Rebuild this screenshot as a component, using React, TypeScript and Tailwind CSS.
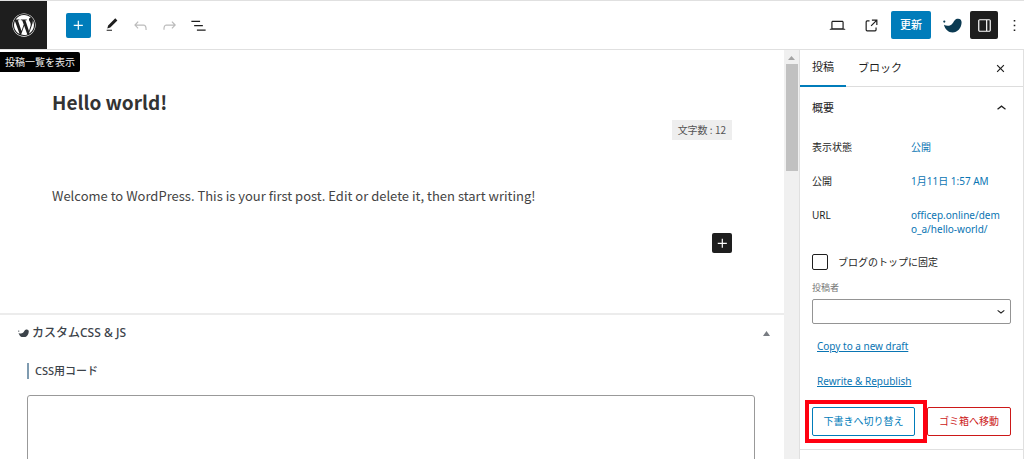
import type { ReactNode } from "react"
import { FaWordpress } from "react-icons/fa"

const icons = {
  plus: "M11 12.5V17.5H12.5V12.5H17.5V11H12.5V6H11V11H6V12.5H11Z",
  edit: "M20.1 5.1L16.9 2 6.2 12.7l-1.3 4.4 4.5-1.3L20.1 5.1zM4 20.8h8v-1.5H4v1.5z",
  undo: "M18.3 11.7c-.6-.6-1.4-.9-2.3-.9H6.7l2.9-3.3-1.1-1-4.5 5L8.5 16l1-1-2.7-2.7H16c.5 0 .9.2 1.3.5 1 1 1 3.4 1 4.5v.3h1.5v-.2c0-1.5 0-4.3-1.5-5.7z",
  redo: "M15.6 6.5l-1.1 1 2.9 3.3H8c-.9 0-1.7.3-2.3.9-1.4 1.5-1.4 4.2-1.4 5.6v.2h1.5v-.3c0-1.1 0-3.5 1-4.5.3-.3.7-.5 1.3-.5h9.2L14.5 15l1.1 1.1 4.6-4.6-4.6-5z",
  list: "M3 6h11v1.5H3V6Zm3.5 5.5h11V13h-11v-1.5ZM21 17H10v1.5h11V17Z",
  desktop: "M20.5 16h-.7V8c0-1.1-.9-2-2-2H6.2c-1.1 0-2 .9-2 2v8h-.7c-.8 0-1.5.7-1.5 1.5h20c0-.8-.7-1.5-1.5-1.5zM5.7 8c0-.3.2-.5.5-.5h11.6c.3 0 .5.2.5.5v7.6H5.7V8z",
  external: "M19.5 4.5h-7V6h4.44l-5.97 5.97 1.06 1.06L18 7.06v4.44h1.5v-7Zm-13 1a2 2 0 0 0-2 2v10a2 2 0 0 0 2 2h10a2 2 0 0 0 2-2v-3H17v3a.5.5 0 0 1-.5.5h-10a.5.5 0 0 1-.5-.5v-10a.5.5 0 0 1 .5-.5h3V5.5h-3Z",
  drawer: "M18 4H6c-1.1 0-2 .9-2 2v12c0 1.1.9 2 2 2h12c1.1 0 2-.9 2-2V6c0-1.1-.9-2-2-2zm-4 14.5H6c-.3 0-.5-.2-.5-.5V6c0-.3.2-.5.5-.5h8v13zm4.5-.5c0 .3-.2.5-.5.5h-2.5v-13H18c.3 0 .5.2.5.5v12z",
  more: "M13 19h-2v-2h2v2zm0-6h-2v-2h2v2zm0-6h-2V5h2v2z",
  close: "M12 13.06l3.712 3.713 1.061-1.06L13.061 12l3.712-3.712-1.06-1.06L12 10.938 8.288 7.227l-1.061 1.06L10.939 12l-3.712 3.712 1.06 1.061L12 13.061z",
  up: "M6.5 12.4L12 8l5.5 4.4-.9 1.2L12 10l-4.5 3.6-1-1.2z",
  down: "M17.5 11.6L12 16l-5.5-4.4.9-1.2L12 14l4.5-3.6 1 1.2z",
}

function Icon({ name, className = "size-[19px]" }: { name: keyof typeof icons; className?: string }) {
  return (
    <svg viewBox="0 0 24 24" fill="currentColor" className={className} aria-hidden="true">
      <path d={icons[name]} />
    </svg>
  )
}

function Swoosh({ className }: { className: string }) {
  return (
    <svg viewBox="0 0 19 15" fill="currentColor" className={className} aria-hidden="true">
      <circle cx="1.3" cy="3.6" r="1.1" />
      <path d="M1 6.8C3.2 8 6.4 8.4 8.6 6.6 10.6 5 11 1.4 14.2.8 17 .3 18.8 2 18.6 4.8 18.2 10.4 14.4 14.5 9.6 14.5 5.4 14.5 2 11.4 1 6.8Z" />
    </svg>
  )
}

function ToolButton({ label, children, className = "" }: { label: string; children: ReactNode; className?: string }) {
  return (
    <button type="button" aria-label={label} className={`flex h-7 items-center justify-center ${className}`}>
      {children}
    </button>
  )
}

function Header() {
  return (
    <header className="relative flex h-[50px] shrink-0 items-center border-y border-[#e0e0e0]">
      <a href="#posts" aria-label="投稿一覧を表示" className="flex h-full w-[47px] items-center justify-center bg-[#1e1e1e] text-white">
        <FaWordpress className="size-6" />
      </a>
      <span role="tooltip" className="absolute top-[51px] left-0 z-10 rounded-r-xs bg-black px-[5px] text-[10px] leading-5 text-[#f0f0f0]">
        投稿一覧を表示
      </span>
      <div className="ml-[19px] flex items-center gap-1">
        <button type="button" aria-label="ブロックを追加" className="flex size-[25px] items-center justify-center rounded-xs bg-[#007cba] text-white">
          <Icon name="plus" />
        </button>
        <ToolButton label="ツール" className="ml-1 w-[25px]"><Icon name="edit" className="size-4" /></ToolButton>
        <ToolButton label="元に戻す" className="w-[25px] text-[#bbb]"><Icon name="undo" /></ToolButton>
        <ToolButton label="やり直す" className="w-[25px] text-[#bbb]"><Icon name="redo" /></ToolButton>
        <ToolButton label="リスト表示" className="w-[25px]"><Icon name="list" /></ToolButton>
      </div>
      <div className="ml-auto flex items-center gap-[6px]">
        <ToolButton label="表示" className="w-7"><Icon name="desktop" /></ToolButton>
        <ToolButton label="投稿を表示" className="w-7"><Icon name="external" /></ToolButton>
        <button type="button" className="h-7 w-10 rounded-xs bg-[#007cba] text-[11px] font-medium text-white">更新</button>
        <ToolButton label="テーマ設定" className="w-[27px] pl-[3px] text-[#0b3a52]"><Swoosh className="w-[19px]" /></ToolButton>
        <ToolButton label="設定" className="w-7 rounded-xs bg-[#1e1e1e] text-white"><Icon name="drawer" /></ToolButton>
        <ToolButton label="オプション" className="w-5"><Icon name="more" /></ToolButton>
      </div>
    </header>
  )
}

function Editor() {
  return (
    <main className="flex min-w-0 flex-1 flex-col overflow-hidden">
      <section className="flex flex-col border-b-2 border-[#ececec] px-13 pt-9 pb-15 font-['Noto_Sans_CJK_JP',sans-serif] text-[#333]">
        <h1 className="text-[19px] leading-8 font-bold">Hello world!</h1>
        <span className="mt-[2px] self-end bg-[#eee] px-[6px] text-[10px] leading-5 text-[#555]">文字数 : 12</span>
        <p className="mt-[46px] text-[13px] leading-5 text-[#444]">
          Welcome to WordPress. This is your first post. Edit or delete it, then start writing!
        </p>
        <button type="button" aria-label="ブロックを追加" className="mt-[27px] flex size-5 items-center justify-center self-end rounded-xs bg-[#1e1e1e] text-white">
          <Icon name="plus" />
        </button>
      </section>
      <section className="flex flex-1 flex-col text-[#3c434a]">
        <div className="flex h-9 items-center justify-between pr-[14px] pl-[18px]">
          <h2 className="flex items-center gap-[3px] text-xs font-medium">
            <Swoosh className="w-[11px]" />
            カスタムCSS &amp; JS
          </h2>
          <button type="button" aria-label="パネルを切り替え" className="text-[#787c82]">
            <svg viewBox="0 0 7 5" fill="currentColor" className="w-[7px]"><path d="M3.5 0 7 5H0Z" /></svg>
          </button>
        </div>
        <div className="flex flex-1 flex-col pt-3 pr-[29px] pl-[27px]">
          <label htmlFor="css-code" className="self-start border-l-2 border-[#7f9bb0] pl-[6px] text-[11px] leading-4 font-medium">
            CSS用コード
          </label>
          <textarea id="css-code" className="mt-4 min-h-24 resize-none rounded-[3px] border border-[#999]" />
        </div>
      </section>
    </main>
  )
}

function Scrollbar() {
  return (
    <div className="flex w-[15px] shrink-0 flex-col items-center bg-[#f0f0f0]" aria-hidden="true">
      <svg viewBox="0 0 15 14" fill="#a3a3a3" className="w-[15px]"><path d="M7.5 6 11 10H4Z" /></svg>
      <div className="h-[107px] w-3 bg-[#c1c1c1]" />
    </div>
  )
}

function Row({ label, children }: { label: string; children: ReactNode }) {
  return (
    <div className="flex leading-[14px]">
      <span className="w-[99px] shrink-0">{label}</span>
      <a href="#edit" className="min-w-0 flex-1 pr-2 break-all text-[#0a75b3]">{children}</a>
    </div>
  )
}

function Sidebar() {
  return (
    <aside className="flex w-[225px] shrink-0 flex-col border-x border-[#e0e0e0]">
      <div className="flex h-[37px] items-stretch border-b border-[#ddd] text-[11px]">
        <button type="button" className="-mb-px border-b-2 border-[#007cba] px-3">投稿</button>
        <button type="button" className="px-3">ブロック</button>
        <button type="button" aria-label="設定を閉じる" className="mr-[13px] ml-auto"><Icon name="close" /></button>
      </div>
      <div className="flex flex-col border-b border-[#e0e0e0] pr-3 pb-[13px] pl-3">
        <button type="button" className="flex h-[42px] items-center justify-between text-[11px]">
          概要
          <Icon name="up" />
        </button>
        <div className="mt-[11px] flex flex-col gap-5">
          <Row label="表示状態">公開</Row>
          <Row label="公開">1月11日 1:57 AM</Row>
          <Row label="URL">officep.online/demo_a/hello-world/</Row>
        </div>
        <label className="mt-[18px] flex items-center gap-[10px] leading-4">
          <input type="checkbox" className="size-4 appearance-none rounded-xs border border-[#1e1e1e]" />
          ブログのトップに固定
        </label>
        <label htmlFor="author" className="mt-[11px] text-[9px] leading-[14px] text-[#757575]">投稿者</label>
        <div className="relative mt-1">
          <select id="author" className="block h-[25px] w-full appearance-none rounded-xs border border-[#949494]" />
          <Icon name="down" className="pointer-events-none absolute top-1 right-[2px] size-4" />
        </div>
        <a href="#copy" className="mt-[14px] ml-[5px] self-start text-[10px] leading-4 text-[#0a75b3] underline">Copy to a new draft</a>
        <a href="#rewrite" className="mt-[19px] ml-[5px] self-start text-[10px] leading-4 text-[#0a75b3] underline">Rewrite &amp; Republish</a>
        <div className="mt-[18px] flex gap-3 whitespace-nowrap">
          <div className="relative flex flex-[5]">
            <button type="button" className="h-[29px] flex-1 rounded-xs border border-[#007cba] text-[#007cba]">下書きへ切り替え</button>
            {/* highlight frame */}
            <span className="pointer-events-none absolute -inset-y-[7px] -right-3 -left-[7px] border-4 border-[#ff0010]" />
          </div>
          <button type="button" className="h-[29px] flex-[4] rounded-xs border border-[#cc1818] text-[#cc1818]">ゴミ箱へ移動</button>
        </div>
      </div>
    </aside>
  )
}

export default function App() {
  return (
    <div className="flex h-screen flex-col overflow-hidden bg-white font-['Noto_Sans','Noto_Sans_CJK_JP',sans-serif] text-[10px] text-[#1e1e1e]">
      <Header />
      <div className="flex min-h-0 flex-1">
        <Editor />
        <Scrollbar />
        <Sidebar />
      </div>
    </div>
  )
}
